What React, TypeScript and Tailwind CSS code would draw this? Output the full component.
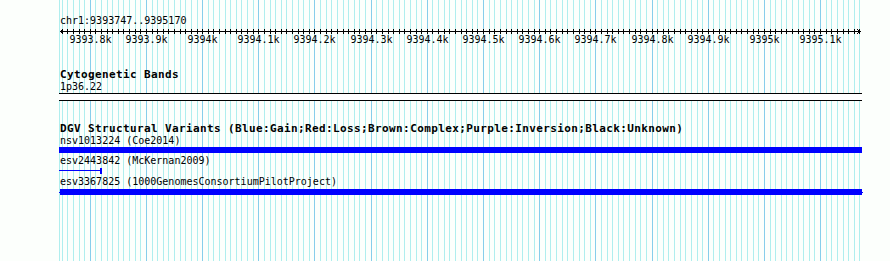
const START = 9393747;
const END = 9395170;
const X0 = 60;
const WIDTH = 800;

function px(bp: number): number {
  return X0 + ((bp - START) * WIDTH) / (END - START + 1);
}

const minorTicks: number[] = [];
for (let bp = 9393750; bp <= END; bp += 10) minorTicks.push(bp);
const majorTicks = minorTicks.filter((bp) => bp % 100 === 0);

function tickLabel(bp: number): string {
  const k = bp / 1000;
  return `${Number.isInteger(k) ? k : k.toFixed(1)}k`;
}

const mono = "font-['DejaVu_Sans_Mono','Liberation_Mono',monospace]";

function GuideLines(): React.ReactElement {
  return (
    <svg
      className="absolute inset-0 pointer-events-none"
      width={890}
      height={261}
      shapeRendering="crispEdges"
    >
      <rect x={59} y={0} width={1} height={261} fill="#afeeee" />
      {minorTicks.map((bp) => (
        <rect
          key={bp}
          x={Math.round(px(bp))}
          y={0}
          width={1}
          height={261}
          fill={bp % 100 === 0 ? '#87ceeb' : '#afeeee'}
        />
      ))}
    </svg>
  );
}

function Ruler(): React.ReactElement {
  return (
    <>
      <svg className="block" width={890} height={9} shapeRendering="crispEdges">
        <rect x={60} y={5} width={801} height={1} fill="#000" />
        {minorTicks.map((bp) => (
          <rect key={bp} x={Math.round(px(bp))} y={3} width={1} height={5} fill="#000" />
        ))}
        <path d="M60.5 5.5 L63.5 3.5 M60.5 5.5 L63.5 7.5" stroke="#000" fill="none" />
        <path d="M860.5 5.5 L857.5 3.5 M860.5 5.5 L857.5 7.5" stroke="#000" fill="none" />
      </svg>
      <div className="relative h-[10px]">
        {majorTicks.map((bp) => (
          <span
            key={bp}
            className="absolute top-0 -translate-x-1/2 text-[10px] leading-[10px] text-black whitespace-nowrap"
            style={{ left: Math.round(px(bp)) + 0.5 }}
          >
            {tickLabel(bp)}
          </span>
        ))}
      </div>
    </>
  );
}

function TrackTitle({ children }: { children: string }): React.ReactElement {
  return (
    <div className="pl-[60px] h-[11px] text-[11px] leading-[11px] font-bold tracking-[0.38px] text-black whitespace-nowrap">
      {children}
    </div>
  );
}

function ItemLabel({ children }: { children: string }): React.ReactElement {
  return (
    <div className="pl-[60px] h-[10px] text-[10px] leading-[10px] text-black whitespace-nowrap">
      {children}
    </div>
  );
}

export default function App(): React.ReactElement {
  return (
    <div className={`relative w-[890px] h-[261px] overflow-hidden bg-[#fcfffc] ${mono}`}>
      <GuideLines />
      <div className="relative flex flex-col pt-[16px]">
        <ItemLabel>chr1:9393747..9395170</ItemLabel>
        <Ruler />

        <div className="mt-[24px]">
          <TrackTitle>Cytogenetic Bands</TrackTitle>
        </div>
        <div className="mt-[2px]">
          <ItemLabel>1p36.22</ItemLabel>
        </div>
        <div className="mt-[1px] ml-[59px] w-[803px] h-[8px] border-y border-black bg-white" />

        <div className="mt-[22px]">
          <TrackTitle>
            DGV Structural Variants (Blue:Gain;Red:Loss;Brown:Complex;Purple:Inversion;Black:Unknown)
          </TrackTitle>
        </div>
        <div className="mt-[2px]">
          <ItemLabel>nsv1013224 (Coe2014)</ItemLabel>
        </div>
        <div className="mt-[1px] ml-[59px] w-[803px] h-[6px] bg-[#0000ff]" />

        <div className="mt-[3px]">
          <ItemLabel>esv2443842 (McKernan2009)</ItemLabel>
        </div>
        <div className="mt-[2px] ml-[59px] w-[43px] h-[6px] flex items-start">
          <div className="mt-[2px] flex-1 h-px bg-[#0000ff]" />
          <div className="w-[2px] h-[6px] bg-[#0000ff]" />
        </div>

        <div className="mt-[3px]">
          <ItemLabel>esv3367825 (1000GenomesConsortiumPilotProject)</ItemLabel>
        </div>
        <div className="mt-[2px] ml-[59px] w-[804px] h-[6px] flex items-center">
          <div className="w-px h-px bg-[#0000ff]" />
          <div className="flex-1 h-[6px] bg-[#0000ff]" />
          <div className="w-px h-px bg-[#0000ff]" />
        </div>
      </div>
    </div>
  );
}
